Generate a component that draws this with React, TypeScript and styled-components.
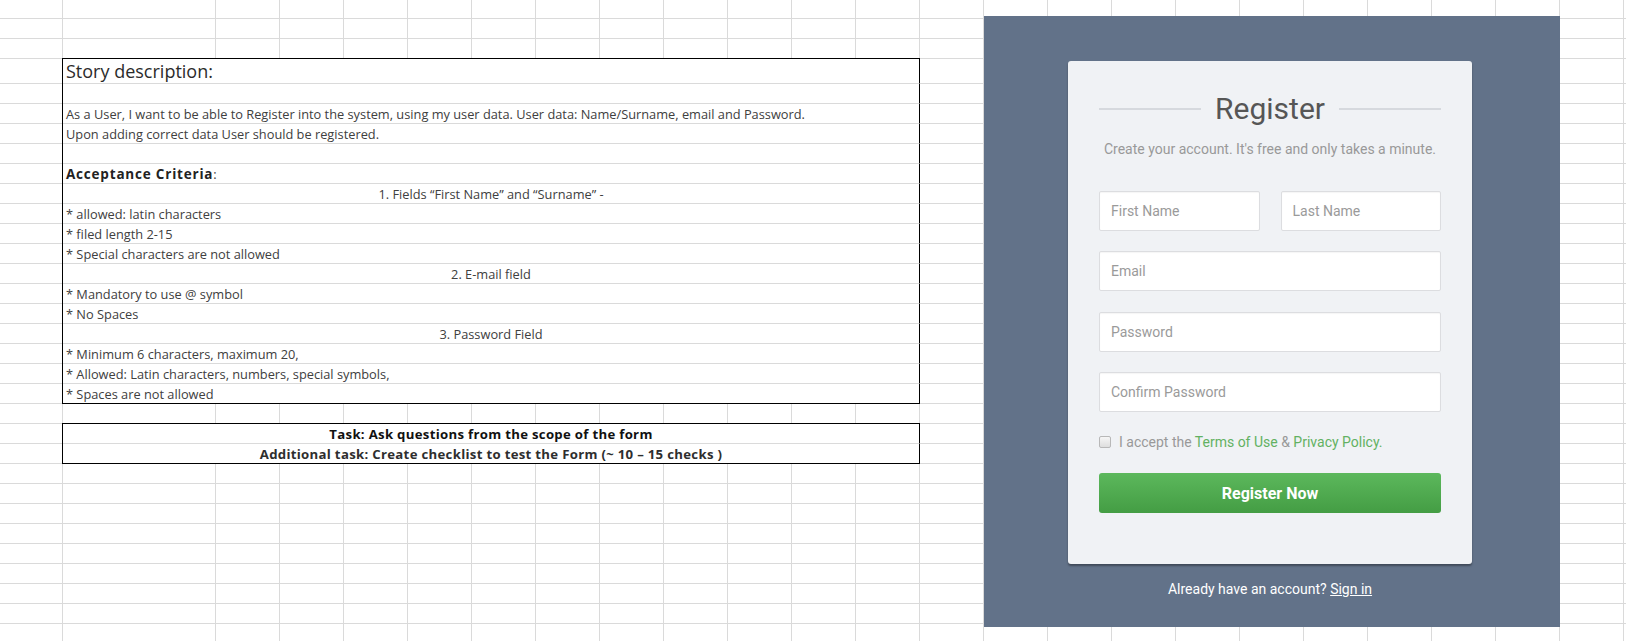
import React from "react";
import styled, { createGlobalStyle } from "styled-components";

const GRID = "#dadada";

const Global = createGlobalStyle`
  html, body { margin: 0; padding: 0; background: #ffffff; overflow: hidden; }
  body { font-family: "Open Sans", Lato, sans-serif; }
  * { box-sizing: border-box; }
`;

const Page = styled.div`
  position: relative;
  width: 1626px;
  height: 641px;
  overflow: hidden;
  background: #ffffff;
`;

/* ---------- spreadsheet ---------- */

const Sheet = styled.div`
  display: flex;
  flex-direction: column;
`;

const Row = styled.div<{ $h: number }>`
  display: flex;
  flex: none;
  height: ${(p) => p.$h}px;
`;

const Cell = styled.div<{ $w: number }>`
  flex: none;
  width: ${(p) => p.$w}px;
  height: 100%;
  border-right: 1px solid ${GRID};
  border-bottom: 1px solid ${GRID};
`;

const Merged = styled.div<{
  $w: number;
  $top?: boolean;
  $bottom?: boolean;
  $center?: boolean;
}>`
  flex: none;
  width: ${(p) => p.$w}px;
  height: 100%;
  border-right: 1px solid #000;
  border-bottom: 1px solid ${(p) => (p.$bottom ? "#000" : GRID)};
  box-shadow: -1px 0 0 #000
    ${(p) => (p.$top ? ", 0 -1px 0 #000, -1px -1px 0 #000" : "")};
  display: flex;
  align-items: flex-end;
  justify-content: ${(p) => (p.$center ? "center" : "flex-start")};
  padding: 0 3px 1px;
  white-space: nowrap;
  overflow: hidden;
`;

type Kind = "title" | "body" | "task" | "task2";

const CellText = styled.span<{ $kind: Kind }>`
  font-family: "Open Sans", Lato, sans-serif;
  color: ${(p) =>
    p.$kind === "title"
      ? "#2b2b2b"
      : p.$kind === "task"
      ? "#111"
      : p.$kind === "task2"
      ? "#2e2e2e"
      : "#404040"};
  font-size: ${(p) =>
    p.$kind === "title" ? 18 : p.$kind === "body" ? 12.8 : 13.2}px;
  font-weight: ${(p) => (p.$kind === "task" || p.$kind === "task2" ? 700 : 400)};
  letter-spacing: ${(p) => (p.$kind === "task" || p.$kind === "task2" ? 0.3 : 0)}px;
  line-height: ${(p) => (p.$kind === "title" ? 22 : 16)}px;
`;

const Strong = styled.b`
  font-weight: 700;
  font-size: 13.5px;
  letter-spacing: 0.8px;
  color: #222;
`;

type BoxSpec = {
  content?: React.ReactNode;
  kind?: Kind;
  center?: boolean;
  top?: boolean;
  bottom?: boolean;
};

type RowSpec = { h: number; box?: BoxSpec };

const COL_A = 63;
const COL_B = 153;
const COL_W = 64;
const COL_COUNT = 23;
const BOX_SPAN = 11;
const BOX_W = COL_B + BOX_SPAN * COL_W;

const body = (t: string, center = false, bottom = false): RowSpec => ({
  h: 20,
  box: { content: t, kind: "body", center, bottom },
});

const rows: RowSpec[] = [
  { h: 19 },
  { h: 20 },
  { h: 20 },
  { h: 25, box: { content: "Story description:", kind: "title", top: true } },
  { h: 20, box: {} },
  body(
    "As a User, I want to be able to Register into the system, using my user data. User data: Name/Surname, email and Password."
  ),
  body("Upon adding correct data User should be registered."),
  { h: 20, box: {} },
  {
    h: 20,
    box: {
      content: (
        <>
          <Strong>Acceptance Criteria</Strong>:
        </>
      ),
      kind: "body",
    },
  },
  body("1. Fields \u201cFirst Name\u201d and \u201cSurname\u201d -", true),
  body("* allowed: latin characters"),
  body("* filed length 2-15"),
  body("* Special characters are not allowed"),
  body("2. E-mail field", true),
  body("* Mandatory to use @ symbol"),
  body("* No Spaces"),
  body("3. Password Field", true),
  body("* Minimum 6 characters, maximum 20,"),
  body("* Allowed: Latin characters, numbers, special symbols,"),
  body("* Spaces are not allowed", false, true),
  { h: 20 },
  {
    h: 20,
    box: {
      content: "Task: Ask questions from the scope of the form",
      kind: "task",
      center: true,
      top: true,
    },
  },
  {
    h: 20,
    box: {
      content:
        "Additional task: Create checklist to test the Form (~ 10 \u2013 15 checks )",
      kind: "task2",
      center: true,
      bottom: true,
    },
  },
  ...Array.from({ length: 10 }, () => ({ h: 20 })),
];

function SheetRow({ spec }: { spec: RowSpec }) {
  const rest = spec.box ? COL_COUNT - BOX_SPAN : COL_COUNT;
  return (
    <Row $h={spec.h}>
      <Cell $w={COL_A} />
      {spec.box ? (
        <Merged
          $w={BOX_W}
          $top={spec.box.top}
          $bottom={spec.box.bottom}
          $center={spec.box.center}
        >
          {spec.box.content ? (
            <CellText $kind={spec.box.kind ?? "body"}>{spec.box.content}</CellText>
          ) : null}
        </Merged>
      ) : (
        <Cell $w={COL_B} />
      )}
      {Array.from({ length: rest }, (_, i) => (
        <Cell key={i} $w={COL_W} />
      ))}
    </Row>
  );
}

/* ---------- register panel (floating over the sheet) ---------- */

const Panel = styled.section`
  position: absolute;
  left: 984px;
  top: 16px;
  width: 576px;
  height: 611px;
  background: #627289;
  padding: 45px 88px 0 84px;
  display: flex;
  flex-direction: column;
  font-family: Roboto, "Open Sans", sans-serif;
`;

const Card = styled.form`
  background: #f0f2f5;
  border-radius: 3px;
  box-shadow: 0 2px 2px rgba(0, 0, 0, 0.35);
  padding: 30px 31px 51px;
  display: flex;
  flex-direction: column;
`;

const TitleRow = styled.div`
  display: flex;
  align-items: center;
  gap: 14px;
  height: 36px;
`;

const Rule = styled.span`
  flex: 1;
  height: 2px;
  background: #d6d9de;
`;

const Title = styled.h2`
  margin: 0;
  font-family: Roboto, sans-serif;
  font-weight: 400;
  font-size: 30px;
  line-height: 36px;
  color: #565656;
`;

const Subtitle = styled.p`
  margin: 12px 0 0;
  font-size: 14px;
  line-height: 20px;
  color: #999;
  text-align: center;
`;

const Fields = styled.div`
  margin-top: 32px;
  display: flex;
  flex-direction: column;
  gap: 20.4px;
`;

const NameRow = styled.div`
  display: grid;
  grid-template-columns: 1fr 1fr;
  gap: 21px;
`;

const Input = styled.input`
  width: 100%;
  height: 40px;
  border: 1px solid #dcdde0;
  border-radius: 2px;
  background: #fff;
  padding: 0 11px;
  font-family: Roboto, sans-serif;
  font-size: 14px;
  color: #555;
  box-shadow: inset 0 1px 1px rgba(0, 0, 0, 0.04);
  &::placeholder {
    color: #9a9a9a;
  }
`;

const CheckRow = styled.label`
  margin-top: 20px;
  display: flex;
  align-items: center;
  gap: 8px;
  font-size: 14px;
  line-height: 20px;
  color: #999;
`;

const Check = styled.input`
  appearance: none;
  margin: 0;
  width: 12px;
  height: 12px;
  border: 1px solid #b8b8b8;
  border-radius: 2px;
  background: linear-gradient(#f6f6f6, #dedede);
`;

const Link = styled.a`
  color: #62b162;
  text-decoration: none;
`;

const Button = styled.button`
  margin-top: 21px;
  height: 40px;
  border: none;
  border-radius: 3px;
  background: linear-gradient(#5cb85c, #449d44);
  color: #fff;
  font-family: Roboto, sans-serif;
  font-weight: 700;
  font-size: 16px;
`;

const Footer = styled.p`
  margin: 15px 0 0;
  text-align: center;
  color: #fff;
  font-size: 14px;
  line-height: 20px;
  a {
    color: #fff;
    text-decoration: underline;
  }
`;

export default function App() {
  return (
    <Page>
      <Global />
      <Sheet>
        {rows.map((r, i) => (
          <SheetRow key={i} spec={r} />
        ))}
      </Sheet>
      <Panel>
        <Card onSubmit={(e) => e.preventDefault()}>
          <TitleRow>
            <Rule />
            <Title>Register</Title>
            <Rule />
          </TitleRow>
          <Subtitle>Create your account. It's free and only takes a minute.</Subtitle>
          <Fields>
            <NameRow>
              <Input placeholder="First Name" />
              <Input placeholder="Last Name" />
            </NameRow>
            <Input placeholder="Email" />
            <Input placeholder="Password" type="password" />
            <Input placeholder="Confirm Password" type="password" />
          </Fields>
          <CheckRow>
            <Check type="checkbox" />
            <span>
              I accept the <Link href="#">Terms of Use</Link> &amp;{" "}
              <Link href="#">Privacy Policy.</Link>
            </span>
          </CheckRow>
          <Button type="submit">Register Now</Button>
        </Card>
        <Footer>
          Already have an account? <a href="#">Sign in</a>
        </Footer>
      </Panel>
    </Page>
  );
}
